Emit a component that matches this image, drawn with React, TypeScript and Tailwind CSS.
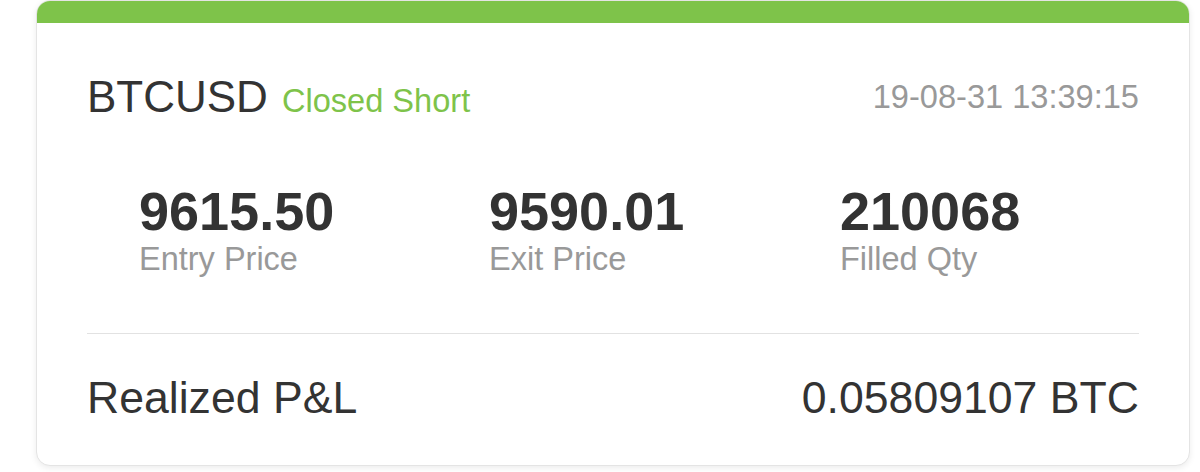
import React from 'react';

const stats = [
    { value: '9615.50', label: 'Entry Price' },
    { value: '9590.01', label: 'Exit Price' },
    { value: '210068', label: 'Filled Qty' }
];

const App: React.FC = () => {
    return (
        <div className="min-h-screen bg-white pl-[36px] pr-[10px] font-['Liberation_Sans',Arial,sans-serif]">
            <div className="w-[1154px] h-[466px] bg-white rounded-[14px] border border-[#e4e4e4] shadow-[0_2px_6px_rgba(0,0,0,0.08)] overflow-hidden">
                <div className="h-[22px] bg-[#7ec34a]" />
                <div className="px-[50px]">
                    <div className="mt-[49px] flex items-center justify-between">
                        <div className="flex items-baseline gap-[14px]">
                            <span className="text-[44px] leading-[50px] text-[#333]">BTCUSD</span>
                            <span className="text-[32.6px] leading-[36px] text-[#7ec34a]">Closed Short</span>
                        </div>
                        <span className="text-[32.6px] leading-[36px] text-[#999]">19-08-31 13:39:15</span>
                    </div>

                    <div className="mt-[62px] pl-[52px] grid grid-cols-[350px_351px_1fr]">
                        {stats.map(s => (
                            <div key={s.label} className="flex flex-col">
                                <span className="text-[54px] leading-[54px] font-bold text-[#333]">{s.value}</span>
                                <span className="mt-[3px] text-[32.5px] leading-[36px] text-[#999]">{s.label}</span>
                            </div>
                        ))}
                    </div>

                    <div className="mt-[56px] h-px bg-[#e2e2e2]" />

                    <div className="mt-[39px] flex items-center justify-between">
                        <span className="text-[44.6px] leading-[50px] text-[#333]">Realized P&amp;L</span>
                        <span className="text-[44.6px] leading-[50px] text-[#333]">0.05809107 BTC</span>
                    </div>
                </div>
            </div>
        </div>
    );
};

export default App;
